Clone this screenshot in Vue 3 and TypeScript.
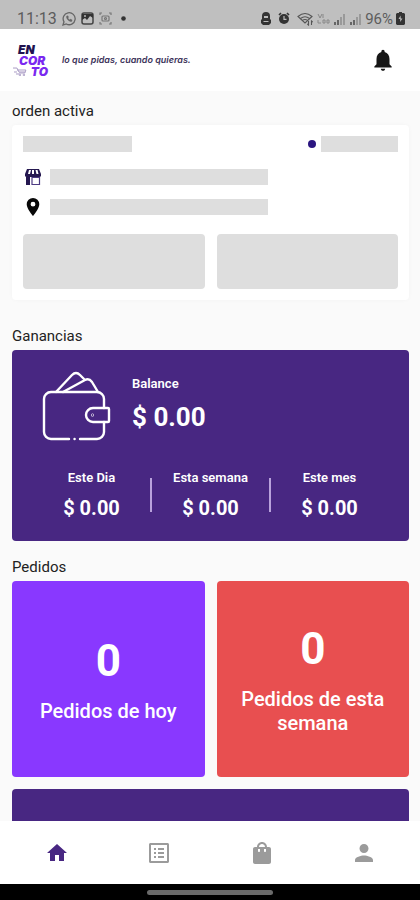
<script setup lang="ts">
import { ref } from 'vue'

interface Earning {
  label: string
  amount: string
}

interface OrderCount {
  label: string
  count: number
  tone: 'violet' | 'red'
}

interface Tab {
  id: string
  label: string
  path: string
}

const balance = '$ 0.00'

const earnings: Earning[] = [
  { label: 'Este Dia', amount: '$ 0.00' },
  { label: 'Esta semana', amount: '$ 0.00' },
  { label: 'Este mes', amount: '$ 0.00' },
]

const orders: OrderCount[] = [
  { label: 'Pedidos de hoy', count: 0, tone: 'violet' },
  { label: 'Pedidos de esta semana', count: 0, tone: 'red' },
]

const tabs: Tab[] = [
  { id: 'home', label: 'Inicio', path: 'M10 20v-6h4v6h5v-8h3L12 3 2 12h3v8z' },
  {
    id: 'list',
    label: 'Lista',
    path: 'M20.5 2h-17C2.700 2 2 2.700 2 3.500v17c0 .8.700 1.500 1.500 1.500h17c.8 0 1.500-.7 1.500-1.500v-17c0-.8-.7-1.500-1.500-1.500zM20 20H4V4h16zM11 7h6v2h-6zm0 4h6v2h-6zm0 4h6v2h-6zM7 7h2v2H7zm0 4h2v2H7zm0 4h2v2H7z',
  },
  {
    id: 'bag',
    label: 'Pedidos',
    path: 'M19 6h-2c0-2.760-2.240-5-5-5S7 3.240 7 6H5c-1.100 0-2 .9-2 2v13c0 1.100.9 2 2 2h14c1.100 0 2-.9 2-2V8c0-1.100-.9-2-2-2zm-9 4c0 .55-.45 1-1 1s-1-.45-1-1V8h2zm2-7c1.660 0 3 1.340 3 3H9c0-1.660 1.340-3 3-3zm4 7c0 .55-.45 1-1 1s-1-.45-1-1V8h2z',
  },
  {
    id: 'profile',
    label: 'Perfil',
    path: 'M12 12c2.500 0 4.500-2 4.500-4.500S14.500 3 12 3 7.500 5 7.500 7.500 9.500 12 12 12zm0 2.500c-3 0-9 1.500-9 4.500v2h18v-2c0-3-6-4.500-9-4.500z',
  },
]

const activeTab = ref('home')
</script>

<template>
  <div class="app">
    <div class="status">
      <div class="status-group">
        <span class="clock">11:13</span>
        <svg width="14" height="14" viewBox="0 0 14 14" fill="none" stroke="#666" stroke-width="1.300">
          <path d="M1 13l1-3.200A6 6 0 1 1 4.300 12z" />
          <path d="M4.500 4.200c-.5 2.500 2.800 5.800 5.300 5.200l.3-1.500-1.700-.8-.8.8-1.800-1.800.8-.9-.7-1.500z" fill="#666" stroke-width=".4" />
        </svg>
        <svg width="13" height="13" viewBox="0 0 13 13">
          <rect x="1" y="1" width="11" height="11" rx="2" fill="none" stroke="#444" stroke-width="1.500" />
          <path d="M1 2h11v4L9 4 6 8 4 6 1 8z" fill="#333" />
          <circle cx="4" cy="4" r="1" fill="#bbb" />
        </svg>
        <svg width="13" height="13" viewBox="0 0 13 13" fill="none" stroke="#777" stroke-width="1.200">
          <path d="M1 3V1h2M10 1h2v2M12 10v2h-2M3 12H1v-2" />
          <rect x="3" y="4" width="7" height="5" rx="1" />
          <circle cx="6.500" cy="6.500" r="1" />
        </svg>
        <svg class="status-dot" width="5" height="5" viewBox="0 0 5 5"><circle cx="2.500" cy="2.500" r="2.300" fill="#333" /></svg>
      </div>
      <div class="status-group status-right">
        <svg width="10" height="13" viewBox="0 0 10 13" fill="#333">
          <path d="M5 0a4 4 0 0 1 4 4v3l1 1v3l-2 2H2l-2-2V8l1-1V4a4 4 0 0 1 4-4z" />
          <path d="M3 4h4v2H3zM2.500 9h5v1h-5z" fill="#bbb" />
        </svg>
        <svg class="alarm" width="12" height="13" viewBox="0 0 12 13">
          <path d="M1 3l2-2M11 3L9 1" stroke="#333" stroke-width="1.600" />
          <circle cx="6" cy="7" r="5" fill="#333" />
          <path d="M6 4v3.300h2.500" fill="none" stroke="#bbb" stroke-width="1.200" />
        </svg>
        <svg width="17" height="14" viewBox="0 0 17 14" fill="none" stroke="#555" stroke-width="1.100">
          <path d="M1 4.500q7-6 14 0L8 11zM3.500 6.500q4.500-3.500 9 0M5.500 8.500q2.500-2 5 0" />
          <path d="M11.500 9v4l-1.200-1.200M14.500 13V9l1.200 1.200" />
        </svg>
        <svg width="13" height="11" viewBox="0 0 13 11" fill="none" stroke="#888" stroke-width="1">
          <path d="M1 1l2 4 2-4M6 1v4M1 7v3h3M6 7h2v3H6zM10 7h2v3h-2z" />
        </svg>
        <svg width="13" height="12" viewBox="0 0 13 12">
          <path d="M1 9h2v3H1zM4 7h2v5H4z" fill="#666" />
          <path d="M7 4h2v8H7zM10 1h2v11h-2z" fill="#999" />
        </svg>
        <svg width="13" height="12" viewBox="0 0 13 12">
          <path d="M1 9h2v3H1zM4 7h2v5H4z" fill="#666" />
          <path d="M7 4h2v8H7zM10 1h2v11h-2z" fill="#999" />
        </svg>
        <span class="battery">96%</span>
        <svg width="9" height="13" viewBox="0 0 9 13">
          <path d="M3 0h3v1h2l1 1v10l-1 1H1l-1-1V2l1-1h2z" fill="#333" />
          <path d="M4.500 3.500L2.500 7h1.700v3L6.500 6.500H4.800z" fill="#bbb" />
        </svg>
      </div>
    </div>

    <header class="header">
      <div class="brand">
        <div class="logo">
          <span class="logo-en">EN</span>
          <span class="logo-cor">COR</span>
          <span class="logo-to">
            <svg width="16" height="9" viewBox="0 0 16 9" fill="none" stroke="#a99bc4" stroke-width="1">
              <path d="M0 1h4l2 4h6M4 3h9l-1 3H6M1 5h3M3 7h3" />
              <circle cx="7" cy="8" r=".8" />
              <circle cx="11" cy="8" r=".8" />
            </svg>
            TO
          </span>
        </div>
        <span class="tagline">lo que pidas, cuando quieras.</span>
      </div>
      <button class="bell" type="button" aria-label="Notificaciones">
        <svg width="26" height="26" viewBox="0 0 24 24" fill="#161616">
          <path d="M12 22c1.100 0 2-.9 2-2h-4c0 1.100.9 2 2 2zm6-6v-5c0-3.070-1.640-5.640-4.500-6.320V4c0-.83-.67-1.500-1.500-1.500s-1.500.67-1.500 1.500v.68C7.630 5.360 6 7.920 6 11v5l-2 2v1h16v-1z" />
        </svg>
      </button>
    </header>

    <main class="content">
      <section class="section">
        <h2 class="title">orden activa</h2>
        <div class="order">
          <div class="order-top">
            <div class="bone bone-title"></div>
            <div class="order-state">
              <span class="dot"></span>
              <div class="bone bone-state"></div>
            </div>
          </div>
          <div class="order-lines">
            <div class="order-line">
              <svg width="20" height="18" viewBox="0 0 20 18">
                <path d="M4 1h12l2 5v2a2 2 0 0 1-2 1H4a2 2 0 0 1-2-1V6z" fill="#251850" />
                <path d="M6 2h2L7 6H5zM9 2h2v4H9zM12.500 2h2l1 4h-2z" fill="#fff" />
                <path d="M3 9h4v8H3z" fill="#251850" />
                <path d="M9 9.500h7.500v7H9z" fill="#fff" stroke="#4d3b82" stroke-width="1.200" />
              </svg>
              <div class="bone bone-line"></div>
            </div>
            <div class="order-line">
              <svg width="20" height="18" viewBox="0 0 20 18">
                <path d="M10 0a6.300 6.300 0 0 0-6.300 6.300C3.700 11 10 18 10 18s6.300-7 6.300-11.700A6.300 6.300 0 0 0 10 0zm0 8.600a2.400 2.400 0 1 1 0-4.800 2.400 2.400 0 0 1 0 4.800z" fill="#080808" />
              </svg>
              <div class="bone bone-line"></div>
            </div>
          </div>
          <div class="order-actions">
            <div class="bone bone-action"></div>
            <div class="bone bone-action"></div>
          </div>
        </div>
      </section>

      <section class="section">
        <h2 class="title">Ganancias</h2>
        <div class="earnings">
          <div class="balance">
            <svg width="70" height="70" viewBox="0 0 70 70" fill="none" stroke="#fff" stroke-width="2.400" stroke-linecap="round" stroke-linejoin="round">
              <path d="M27 68H9a7 7 0 0 1-7-7V28a7 7 0 0 1 7-7h46a7 7 0 0 1 7 7v9M62 51v10a7 7 0 0 1-7 7H38" />
              <path d="M32.500 68h.1" />
              <path d="M14 21L30 4q4-4 8 0l5 5M21 21l22-12q4-2 7 2l6 10" />
              <path d="M66 37H51a7 7 0 0 0 0 14h15q1 0 1-1V38q0-1-1-1z" />
              <circle cx="50.500" cy="44" r=".3" />
            </svg>
            <div class="balance-text">
              <span class="label">Balance</span>
              <strong class="balance-amount">{{ balance }}</strong>
            </div>
          </div>
          <div class="periods">
            <div v-for="item in earnings" :key="item.label" class="period">
              <span class="label">{{ item.label }}</span>
              <strong class="amount">{{ item.amount }}</strong>
            </div>
          </div>
        </div>
      </section>

      <section class="section">
        <h2 class="title">Pedidos</h2>
        <div class="orders">
          <div v-for="item in orders" :key="item.label" class="tile" :class="item.tone">
            <strong class="count">{{ item.count }}</strong>
            <span class="tile-label">{{ item.label }}</span>
          </div>
          <div class="tile wide"></div>
        </div>
      </section>
    </main>

    <nav class="tabs">
      <button
        v-for="tab in tabs"
        :key="tab.id"
        type="button"
        class="tab"
        :class="{ active: tab.id === activeTab }"
        :aria-label="tab.label"
        @click="activeTab = tab.id"
      >
        <svg width="24" height="24" viewBox="0 0 24 24" fill="currentColor" fill-rule="evenodd"><path :d="tab.path" /></svg>
      </button>
    </nav>
    <div class="gesture"><span class="handle"></span></div>
  </div>
</template>

<style>
body {
  margin: 0;
}
</style>

<style scoped>
.app {
  display: flex;
  flex-direction: column;
  height: 100vh;
  overflow: hidden;
  background: #fafafa;
  color: #222;
  font-family: Roboto, "Liberation Sans", sans-serif;
}

.status {
  display: flex;
  flex: none;
  align-items: center;
  justify-content: space-between;
  box-sizing: border-box;
  height: 29px;
  padding: 8px 15px 0 17px;
  background: #bfbfbf;
  color: #5c5c5c;
}

.status-group {
  display: flex;
  align-items: center;
  gap: 5px;
}

.status-right {
  gap: 3px;
}

.status-dot {
  margin-left: 4px;
}

.alarm {
  margin: 0 4px;
}

.clock,
.battery {
  font-size: 15px;
  line-height: 20px;
}

.clock {
  font-size: 16px;
}

.header {
  display: flex;
  flex: none;
  align-items: center;
  justify-content: space-between;
  height: 62px;
  padding: 0 24px 0 13px;
  background: #fff;
}

.brand {
  display: flex;
  align-items: center;
  gap: 14px;
}

.logo {
  display: flex;
  flex-direction: column;
  width: 35px;
  font: italic 900 12px/11px Inter, sans-serif;
}

.logo-en {
  padding-left: 5px;
  color: #21114f;
}

.logo-cor {
  padding-left: 6px;
  color: #7a28f0;
}

.logo-to {
  display: flex;
  align-items: center;
  gap: 2px;
  color: #7a28f0;
}

.tagline {
  color: #3b3259;
  font: italic 600 9px/12px Inter, sans-serif;
}

.bell {
  display: flex;
  padding: 0;
  border: 0;
  background: none;
}

.content {
  display: flex;
  flex: 1;
  flex-direction: column;
  min-height: 0;
  padding: 10px 11px 0 12px;
  overflow: hidden;
}

.section {
  flex: none;
  margin-bottom: 16px;
}

.section:first-child {
  margin-bottom: 26px;
}

.title {
  margin: 0 0 4px;
  font-size: 15px;
  font-weight: 400;
  line-height: 20px;
}

.order {
  padding: 11px;
  border-radius: 4px;
  background: #fff;
  box-shadow: 0 0 4px rgba(0, 0, 0, 0.03);
}

.bone {
  height: 16px;
  background: #dedede;
}

.order-top,
.order-state,
.order-line,
.order-actions {
  display: flex;
  align-items: center;
}

.order-top {
  justify-content: space-between;
}

.bone-title {
  width: 29%;
}

.order-state {
  justify-content: flex-end;
  gap: 5px;
  width: 50%;
}

.dot {
  width: 8px;
  height: 8px;
  border-radius: 50%;
  background: #2b1680;
}

.bone-state {
  width: 41%;
}

.order-lines {
  display: grid;
  gap: 12px;
  padding: 16px 0 18px;
}

.order-line {
  gap: 7px;
}

.bone-line {
  width: 58%;
}

.order-actions {
  gap: 12px;
}

.bone-action {
  flex: 1;
  height: 55px;
  border-radius: 4px;
}

.earnings {
  box-sizing: border-box;
  padding: 21px 20px;
  border-radius: 4px;
  background: #482782;
  color: #fff;
}

.balance {
  display: flex;
  gap: 20px;
  padding-left: 10px;
}

.balance-text {
  display: flex;
  flex-direction: column;
  gap: 8px;
  padding-top: 5px;
}

.label {
  font-size: 13px;
  font-weight: 600;
  line-height: 16px;
}

.balance-amount {
  font-size: 26px;
  line-height: 34px;
}

.periods {
  display: grid;
  grid-template-columns: repeat(3, 1fr);
  padding-top: 29px;
}

.period {
  display: flex;
  position: relative;
  flex-direction: column;
  align-items: center;
  gap: 10px;
}

.period + .period::before {
  position: absolute;
  top: 8px;
  bottom: 8px;
  left: -1px;
  width: 2px;
  background: #b9a2dc;
  content: "";
}

.amount {
  font-size: 20px;
  line-height: 24px;
}

.orders {
  display: grid;
  grid-template-columns: 1fr 1fr;
  gap: 12px;
}

.tile {
  display: flex;
  flex-direction: column;
  align-items: center;
  justify-content: center;
  gap: 12px;
  box-sizing: border-box;
  min-height: 196px;
  padding: 0 16px;
  border-radius: 4px;
  color: #fff;
  text-align: center;
}

.violet {
  background: #8938ff;
}

.red {
  background: #e84f50;
}

.wide {
  grid-column: 1 / -1;
  background: #482782;
}

.count {
  font-size: 44px;
  line-height: 52px;
}

.tile-label {
  font-size: 20px;
  font-weight: 500;
  line-height: 24px;
}

.tabs {
  display: flex;
  flex: none;
  height: 63px;
  padding: 0 5px 0 6px;
  background: #fff;
}

.tab {
  display: flex;
  flex: 1;
  align-items: center;
  justify-content: center;
  padding: 0;
  border: 0;
  background: none;
  color: #9b9b9b;
}

.tab.active {
  color: #482782;
}

.gesture {
  display: flex;
  flex: none;
  align-items: center;
  justify-content: center;
  height: 16px;
  background: #000;
}

.handle {
  width: 30%;
  height: 5px;
  border-radius: 3px;
  background: #6a6a6a;
}
</style>
